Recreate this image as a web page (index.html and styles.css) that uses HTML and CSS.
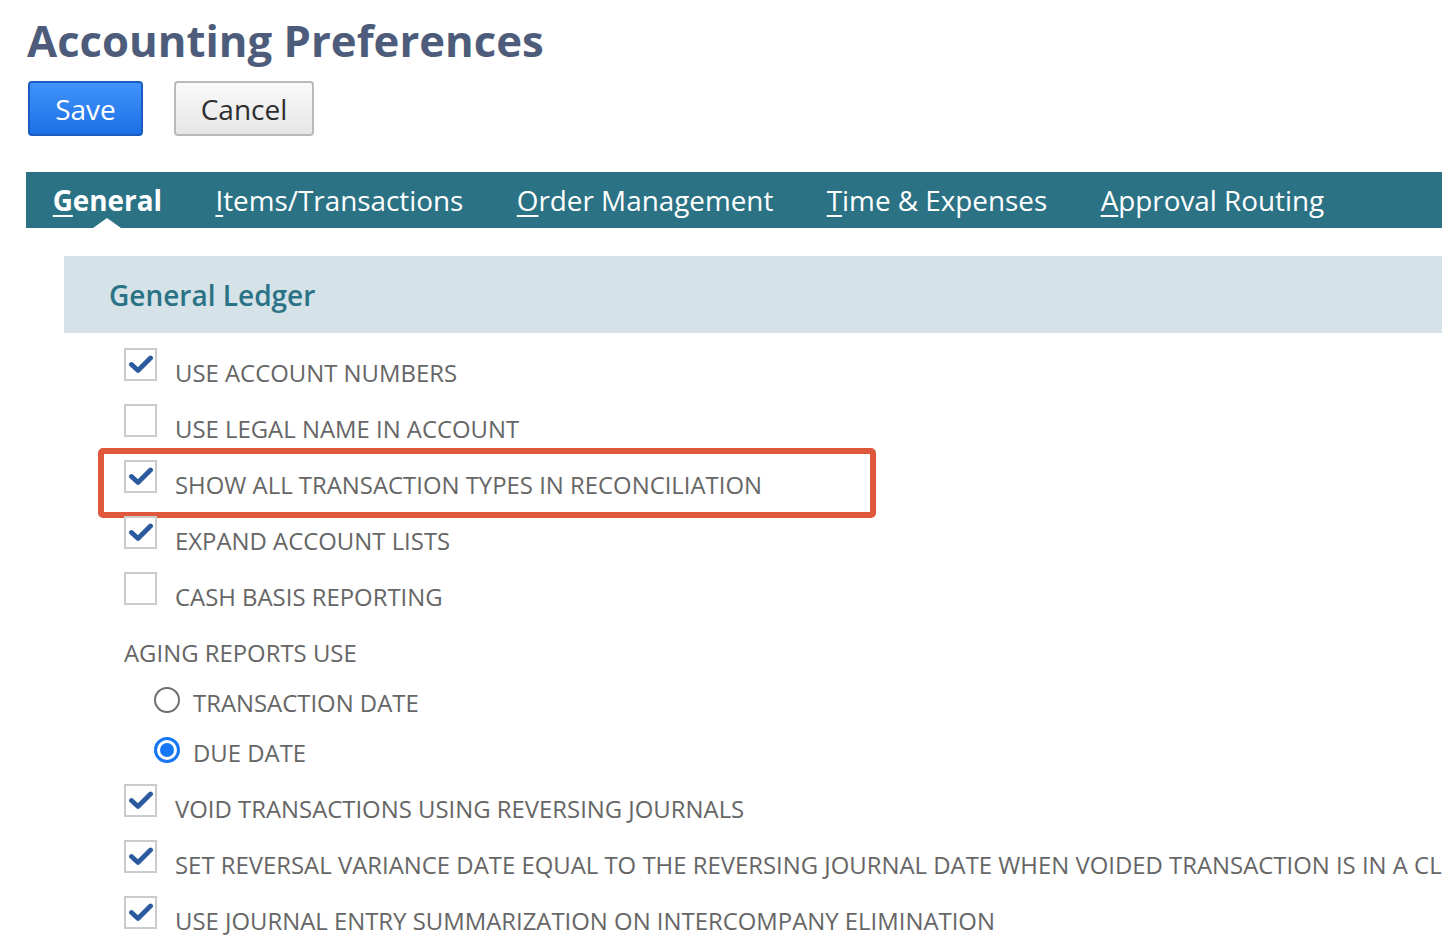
FILE: index.html
```html
<!DOCTYPE html>
<html>
<head>
<meta charset="utf-8">
<title>Accounting Preferences</title>
<link rel="stylesheet" href="styles.css">
</head>
<body>
<div class="page">
  <h1 class="title">Accounting Preferences</h1>
  <div class="actions">
    <button class="btn btn-primary">Save</button>
    <button class="btn btn-secondary">Cancel</button>
  </div>
  <nav class="tabs">
    <a class="tab active"><u>G</u>eneral</a>
    <a class="tab"><u>I</u>tems/Transactions</a>
    <a class="tab"><u>O</u>rder Management</a>
    <a class="tab"><u>T</u>ime &amp; Expenses</a>
    <a class="tab"><u>A</u>pproval Routing</a>
  </nav>
  <section class="section">
    <div class="section-head">General Ledger</div>
    <div class="fields">
      <div class="row"><span class="cb checked"><svg viewBox="0 0 24 19"><path d="M2.5 9.5 L9 15.5 L21.5 3"/></svg></span><span class="label">USE ACCOUNT NUMBERS</span></div>
      <div class="row"><span class="cb"></span><span class="label">USE LEGAL NAME IN ACCOUNT</span></div>
      <div class="row highlighted"><span class="cb checked"><svg viewBox="0 0 24 19"><path d="M2.5 9.5 L9 15.5 L21.5 3"/></svg></span><span class="label">SHOW ALL TRANSACTION TYPES IN RECONCILIATION</span><span class="callout"></span></div>
      <div class="row"><span class="cb checked"><svg viewBox="0 0 24 19"><path d="M2.5 9.5 L9 15.5 L21.5 3"/></svg></span><span class="label">EXPAND ACCOUNT LISTS</span></div>
      <div class="row"><span class="cb"></span><span class="label">CASH BASIS REPORTING</span></div>
      <div class="row"><span class="label plain">AGING REPORTS USE</span></div>
      <div class="radio-row"><span class="radio"></span><span class="label">TRANSACTION DATE</span></div>
      <div class="radio-row"><span class="radio selected"></span><span class="label">DUE DATE</span></div>
      <div class="row"><span class="cb checked"><svg viewBox="0 0 24 19"><path d="M2.5 9.5 L9 15.5 L21.5 3"/></svg></span><span class="label">VOID TRANSACTIONS USING REVERSING JOURNALS</span></div>
      <div class="row"><span class="cb checked"><svg viewBox="0 0 24 19"><path d="M2.5 9.5 L9 15.5 L21.5 3"/></svg></span><span class="label">SET REVERSAL VARIANCE DATE EQUAL TO THE REVERSING JOURNAL DATE WHEN VOIDED TRANSACTION IS IN A CLOSED PERIOD</span></div>
      <div class="row"><span class="cb checked"><svg viewBox="0 0 24 19"><path d="M2.5 9.5 L9 15.5 L21.5 3"/></svg></span><span class="label">USE JOURNAL ENTRY SUMMARIZATION ON INTERCOMPANY ELIMINATION</span></div>
    </div>
  </section>
</div>
</body>
</html>
```

FILE: styles.css
```css
html, body {
  margin: 0;
  padding: 0;
  background: #ffffff;
  overflow: hidden;
}
body {
  font-family: "Open Sans", "Liberation Sans", sans-serif;
  width: 1442px;
  height: 946px;
}
.page {
  padding-top: 10px;
  width: 1800px;
}
.title {
  margin: 0 0 0 27px;
  font-size: 43.7px;
  line-height: 60px;
  font-weight: 700;
  color: #4d5c7a;
}
.actions {
  display: flex;
  gap: 31px;
  margin: 11px 0 0 28px;
}
.btn {
  font-family: "Open Sans", "Liberation Sans", sans-serif;
  font-size: 28px;
  height: 55px;
  border-radius: 4px;
  padding: 0;
  cursor: pointer;
}
.btn-primary {
  width: 115px;
  color: #ffffff;
  background: linear-gradient(#4194fb, #1d6fe6);
  border: 2px solid #1a5cc2;
}
.btn-secondary {
  width: 140px;
  color: #2e2e2e;
  background: linear-gradient(#fafafa, #e6e6e6);
  border: 2px solid #b9b9b9;
}
.tabs {
  display: flex;
  margin: 36px 0 0 26px;
  height: 56px;
  background: #2b7285;
}
.tab {
  position: relative;
  padding: 0 26.7px;
  font-size: 27.85px;
  line-height: 56px;
  color: #ffffff;
  white-space: nowrap;
}
.tab u {
  text-decoration-thickness: 2px;
  text-underline-offset: 4px;
}
.tab.active {
  font-weight: 700;
}
.tab.active::after {
  content: "";
  position: absolute;
  left: 50%;
  bottom: 0;
  margin-left: -14px;
  border-left: 14px solid transparent;
  border-right: 14px solid transparent;
  border-bottom: 10px solid #ffffff;
}
.section {
  margin: 28px 0 0 64px;
}
.section-head {
  height: 77px;
  line-height: 78px;
  padding-left: 45px;
  background: #d5e2e7;
  color: #2a7285;
  font-size: 28px;
  font-weight: 600;
}
.fields {
  padding: 15px 0 0 60px;
}
.row {
  position: relative;
  display: flex;
  align-items: flex-start;
  height: 56px;
}
.radio-row {
  display: flex;
  align-items: flex-start;
  height: 50px;
  padding-left: 30px;
  box-sizing: border-box;
  padding-top: 3px;
}
.label {
  font-size: 23.9px;
  line-height: 32px;
  color: #666666;
  white-space: nowrap;
}
.row .label {
  margin-left: 18px;
  padding-top: 9px;
}
.row .label.plain {
  margin-left: 0;
}
.radio-row .label {
  margin-left: 13px;
}
.cb {
  flex: none;
  width: 33px;
  height: 33px;
  box-sizing: border-box;
  border: 2px solid #cbcbcb;
  background: #ffffff;
  position: relative;
}
.cb svg {
  position: absolute;
  left: 3px;
  top: 5px;
  width: 24px;
  height: 19px;
}
.cb svg path {
  fill: none;
  stroke: #2c5a9e;
  stroke-width: 4.8;
  stroke-linecap: round;
  stroke-linejoin: round;
}
.radio {
  flex: none;
  width: 26px;
  height: 26px;
  box-sizing: border-box;
  border-radius: 50%;
  border: 2px solid #6e6e6e;
  background: #ffffff;
  position: relative;
}
.radio.selected {
  border: 3px solid #1677f5;
}
.radio.selected::after {
  content: "";
  position: absolute;
  left: 3px;
  top: 3px;
  width: 14px;
  height: 14px;
  border-radius: 50%;
  background: #1677f5;
}
.callout {
  position: absolute;
  left: -26px;
  top: -12px;
  width: 778px;
  height: 70px;
  box-sizing: border-box;
  border: 6px solid #e0583b;
  border-radius: 5px;
  pointer-events: none;
}
```
